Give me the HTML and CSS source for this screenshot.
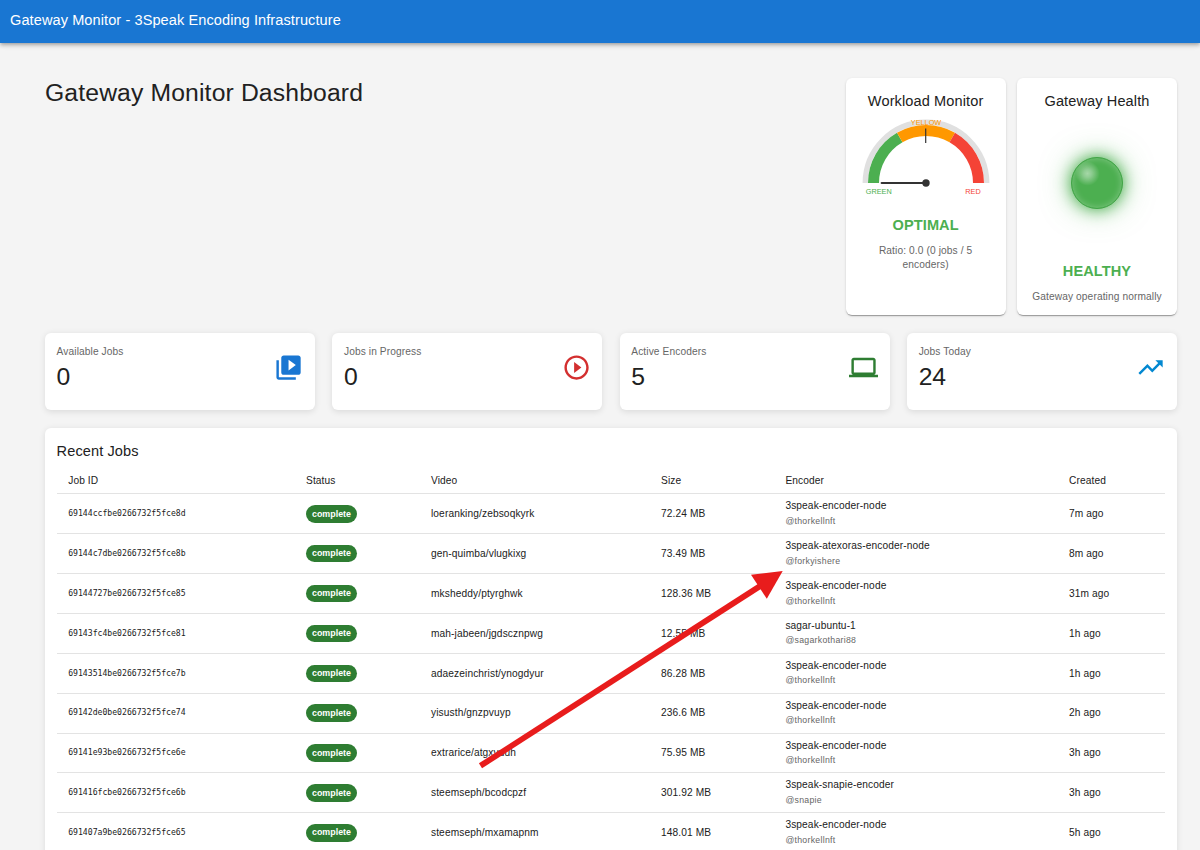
FILE: index.html
```html
<!DOCTYPE html>
<html lang="en">
<head>
<meta charset="utf-8">
<title>Gateway Monitor</title>
<link rel="stylesheet" href="styles.css">
</head>
<body>
<header class="appbar">Gateway Monitor - 3Speak Encoding Infrastructure</header>
<main class="content">
  <section class="hero">
    <h1 class="page-title">Gateway Monitor Dashboard</h1>
    <div class="monitors">
      <article class="monitor">
        <h2 class="monitor-title">Workload Monitor</h2>
        <svg class="gauge" viewBox="0 0 146 87">
          <path d="M12.3 69A60.7 60.7 0 0 1 133.7 69" fill="none" stroke="#e0e0e0" stroke-width="5.4"/>
          <path d="M20.5 69A52.5 52.5 0 0 1 46.75 23.53" fill="none" stroke="#4caf50" stroke-width="11"/>
          <path d="M46.75 23.53A52.5 52.5 0 0 1 99.25 23.53" fill="none" stroke="#ff9800" stroke-width="11"/>
          <path d="M99.25 23.53A52.5 52.5 0 0 1 125.5 69" fill="none" stroke="#f44336" stroke-width="11"/>
          <path d="M72.7 14.5V29" stroke="#333" stroke-width="1.2"/>
          <path d="M28.7 69H73" stroke="#333" stroke-width="2.2" stroke-linecap="round"/>
          <circle cx="73" cy="69" r="3.7" fill="#333"/>
          <text x="25.8" y="79.7" fill="#4caf50">GREEN</text>
          <text x="73" y="11" fill="#ff9800">YELLOW</text>
          <text x="120" y="79.7" fill="#f44336">RED</text>
        </svg>
        <strong class="verdict">OPTIMAL</strong>
        <p class="detail">Ratio: 0.0 (0 jobs / 5 encoders)</p>
      </article>
      <article class="monitor">
        <h2 class="monitor-title">Gateway Health</h2>
        <div class="lamp-area"><div class="lamp"></div></div>
        <strong class="verdict">HEALTHY</strong>
        <p class="detail">Gateway operating normally</p>
      </article>
    </div>
  </section>
  <section class="stats">
    <article class="stat"><div><p class="stat-label">Available Jobs</p><p class="stat-value">0</p></div>
      <svg class="icon blue" viewBox="0 0 24 24"><path d="M4 6H2v14c0 1.1.9 2 2 2h14v-2H4V6zm16-4H8c-1.1 0-2 .9-2 2v12c0 1.1.9 2 2 2h12c1.1 0 2-.9 2-2V4c0-1.1-.9-2-2-2zm-8 12.5v-9l6 4.5-6 4.5z"/></svg></article>
    <article class="stat"><div><p class="stat-label">Jobs in Progress</p><p class="stat-value">0</p></div>
      <svg class="icon red" viewBox="0 0 24 24"><path d="M10 16.5l6-4.5-6-4.5v9zM12 2C6.48 2 2 6.48 2 12s4.48 10 10 10 10-4.48 10-10S17.52 2 12 2zm0 18c-4.41 0-8-3.59-8-8s3.59-8 8-8 8 3.59 8 8-3.59 8-8 8z"/></svg></article>
    <article class="stat"><div><p class="stat-label">Active Encoders</p><p class="stat-value">5</p></div>
      <svg class="icon green" viewBox="0 0 24 24"><path d="M20 18c1.1 0 1.99-.9 1.99-2L22 6c0-1.1-.9-2-2-2H4c-1.1 0-2 .9-2 2v10c0 1.1.9 2 2 2H0v2h24v-2h-4zM4 6h16v10H4V6z"/></svg></article>
    <article class="stat"><div><p class="stat-label">Jobs Today</p><p class="stat-value">24</p></div>
      <svg class="icon sky" viewBox="0 0 24 24"><path d="M16 6l2.29 2.29-4.88 4.88-4-4L2 16.59 3.41 18l6-6 4 4 6.3-6.29L22 12V6z"/></svg></article>
  </section>
  <section class="jobs">
    <h2 class="jobs-title">Recent Jobs</h2>
    <div class="row head"><span>Job ID</span><span>Status</span><span>Video</span><span>Size</span><span>Encoder</span><span>Created</span></div>
    <div class="row"><code>69144ccfbe0266732f5fce8d</code><span><b class="chip">complete</b></span><span>loeranking/zebsoqkyrk</span><span>72.24 MB</span><div>3speak-encoder-node<small>@thorkellnft</small></div><span>7m ago</span></div>
    <div class="row"><code>69144c7dbe0266732f5fce8b</code><span><b class="chip">complete</b></span><span>gen-quimba/vlugkixg</span><span>73.49 MB</span><div>3speak-atexoras-encoder-node<small>@forkyishere</small></div><span>8m ago</span></div>
    <div class="row"><code>69144727be0266732f5fce85</code><span><b class="chip">complete</b></span><span>mksheddy/ptyrghwk</span><span>128.36 MB</span><div>3speak-encoder-node<small>@thorkellnft</small></div><span>31m ago</span></div>
    <div class="row"><code>69143fc4be0266732f5fce81</code><span><b class="chip">complete</b></span><span>mah-jabeen/jgdscznpwg</span><span>12.55 MB</span><div>sagar-ubuntu-1<small>@sagarkothari88</small></div><span>1h ago</span></div>
    <div class="row"><code>69143514be0266732f5fce7b</code><span><b class="chip">complete</b></span><span>adaezeinchrist/ynogdyur</span><span>86.28 MB</span><div>3speak-encoder-node<small>@thorkellnft</small></div><span>1h ago</span></div>
    <div class="row"><code>69142de0be0266732f5fce74</code><span><b class="chip">complete</b></span><span>yisusth/gnzpvuyp</span><span>236.6 MB</span><div>3speak-encoder-node<small>@thorkellnft</small></div><span>2h ago</span></div>
    <div class="row"><code>69141e93be0266732f5fce6e</code><span><b class="chip">complete</b></span><span>extrarice/atgxvuuh</span><span>75.95 MB</span><div>3speak-encoder-node<small>@thorkellnft</small></div><span>3h ago</span></div>
    <div class="row"><code>691416fcbe0266732f5fce6b</code><span><b class="chip">complete</b></span><span>steemseph/bcodcpzf</span><span>301.92 MB</span><div>3speak-snapie-encoder<small>@snapie</small></div><span>3h ago</span></div>
    <div class="row"><code>691407a9be0266732f5fce65</code><span><b class="chip">complete</b></span><span>steemseph/mxamapnm</span><span>148.01 MB</span><div>3speak-encoder-node<small>@thorkellnft</small></div><span>5h ago</span></div>
  </section>
</main>
<svg class="pointer" viewBox="0 0 1200 850"><path d="M480.5 765.8L761 585.5" stroke="#e81c1c" stroke-width="5.8"/><path d="M782.7 571L751 574.7L766.8 598.7Z" fill="#e81c1c"/></svg>
</body>
</html>
```

FILE: styles.css
```css
* { box-sizing: border-box; }
body {
  margin: 0;
  height: 850px;
  overflow: hidden;
  position: relative;
  background: #f4f4f4;
  color: #212121;
  font: 10.18px/14.55px "Liberation Sans", Arial, sans-serif;
  letter-spacing: 0.01071em;
}
h1, h2, p { margin: 0; font-weight: 400; }
.appbar {
  height: 43px;
  padding: 0 10px 3px;
  display: flex;
  align-items: center;
  background: #1976d2;
  color: #fff;
  font-size: 14.55px;
  letter-spacing: 0.006em;
  box-shadow: 0 1.5px 3px -1px rgba(0,0,0,.2), 0 3px 3.6px rgba(0,0,0,.14), 0 1px 7px rgba(0,0,0,.12);
}
.content { padding: 34.7px 23px 0 45px; }
.hero { display: flex; justify-content: space-between; align-items: flex-start; }
.page-title { font-size: 24.73px; line-height: 30.5px; letter-spacing: 0.0055em; }
.monitors { display: flex; gap: 11.4px; }
.monitor {
  width: 160px;
  height: 237.4px;
  padding: 12.4px 11.6px 10.8px;
  display: flex;
  flex-direction: column;
  align-items: center;
  background: #fff;
  border-radius: 6px;
  box-shadow: 0 2px 1px -1px rgba(0,0,0,.2), 0 1px 1px rgba(0,0,0,.14), 0 1px 3px rgba(0,0,0,.12);
}
.monitor-title { font-size: 14.55px; line-height: 23px; letter-spacing: 0.0075em; white-space: nowrap; }
.gauge { width: 146px; height: 87px; margin: 1.2px -5px 12.5px; flex: none; }
.gauge text { font: 7.3px "Liberation Sans", Arial, sans-serif; text-anchor: middle; letter-spacing: 0; }
.verdict { font-size: 14.55px; line-height: 23px; letter-spacing: 0.0075em; color: #4caf50; }
.detail { margin-top: 6.8px; color: #666; text-align: center; }
.lamp-area { height: 142px; margin: -0.8px 0 5.5px; display: flex; align-items: center; }
.lamp {
  width: 52.4px;
  height: 52.4px;
  border-radius: 50%;
  border: 1.5px solid #43a548;
  background: radial-gradient(circle at 31% 31%, rgba(255,255,255,.5) 0, rgba(255,255,255,.38) 8%, rgba(255,255,255,0) 25%), #4caf50;
  box-shadow: 0 0 15px #4caf50, 0 0 30px rgba(76,175,80,.5), inset 0 0 7px rgba(255,255,255,.3);
}
.stats { margin-top: 17.6px; display: grid; grid-template-columns: repeat(4, 1fr); gap: 17.4px; }
.stat {
  height: 77.6px;
  padding: 12.2px 11.6px 19.4px;
  display: flex;
  justify-content: space-between;
  align-items: center;
  background: #fff;
  border-radius: 6px;
  box-shadow: 0 1.5px 6px rgba(0,0,0,.1);
}
.stat > div { align-self: flex-start; }
.stat-label { color: #666; }
.stat-value { font-size: 24.73px; line-height: 30.5px; letter-spacing: 0; margin-top: 2.4px; }
.icon { width: 29.1px; height: 29.1px; fill: currentColor; }
.blue { color: #1976d2; }
.red { color: #d32f2f; }
.green { color: #2e7d32; }
.sky { color: #0288d1; }
.jobs {
  margin-top: 17.8px;
  height: 480px;
  padding: 11.6px;
  background: #fff;
  border-radius: 6px;
  box-shadow: 0 1.5px 6px rgba(0,0,0,.1);
}
.jobs-title { font-size: 14.55px; line-height: 23px; letter-spacing: 0.0075em; }
.row {
  height: 39.87px;
  display: grid;
  grid-template-columns: 237.8px 125px 230px 124.4px 283.6px 1fr;
  align-items: center;
  border-bottom: 1px solid #e3e3e3;
}
.row > * { padding-left: 11.6px; }
.row > span { padding-top: 1px; }
.row.head { height: 31.8px; padding-top: 5px; }
.row small { display: block; color: #666; font-size: 8.73px; line-height: 14.5px; letter-spacing: 0.0333em; }
.row code { font: 8.13px "DejaVu Sans Mono", monospace; letter-spacing: 0; padding-bottom: 1.6px; }
.chip {
  display: flex;
  align-items: center;
  justify-content: center;
  width: 51px;
  height: 17.5px;
  margin-top: -1px;
  border-radius: 9px;
  background: #2e7d32;
  color: #fff;
  font-size: 8.9px;
  letter-spacing: 0;
}
.pointer { position: absolute; inset: 0; width: 1200px; height: 850px; pointer-events: none; }
```
